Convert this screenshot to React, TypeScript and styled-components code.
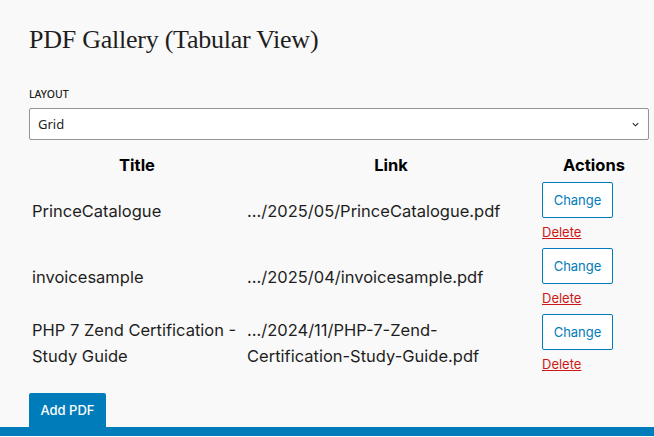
import React from "react";
import styled, { createGlobalStyle } from "styled-components";

const Global = createGlobalStyle`
  html, body { margin: 0; padding: 0; background: #f9f9f9; }
  body { font-family: Inter, "Noto Sans", sans-serif; color: #1e1e1e; }
  * { box-sizing: border-box; }
`;

const Page = styled.div`
  width: 654px;
  height: 437px;
  overflow: hidden;
  display: flex;
  flex-direction: column;
`;

const Content = styled.div`
  padding: 22px 5px 0 29px;
  display: flex;
  flex-direction: column;
`;

const Heading = styled.h2`
  margin: 0;
  font-family: "Liberation Serif", serif;
  font-weight: 400;
  font-size: 26px;
  line-height: 36px;
  letter-spacing: -0.25px;
  color: #1e1e1e;
`;

const Label = styled.label`
  margin-top: 29px;
  font-family: "Noto Sans", sans-serif;
  font-size: 10.5px;
  font-weight: 500;
  text-transform: uppercase;
  line-height: 14px;
  color: #1e1e1e;
`;

const SelectBox = styled.div`
  margin-top: 7px;
  height: 32px;
  width: 620px;
  background: #fff;
  border: 1px solid #949494;
  border-radius: 2px;
  display: flex;
  align-items: center;
  justify-content: space-between;
  padding: 0 7px 0 8px;
  font-family: "Noto Sans", sans-serif;
  font-size: 13px;
  color: #1e1e1e;
`;

const Table = styled.table`
  margin-top: 11px;
  width: 622px;
  border-collapse: collapse;
  table-layout: fixed;
`;

const Th = styled.th<{ $w: number }>`
  width: ${(p) => p.$w}px;
  font-size: 16.5px;
  font-weight: 700;
  text-align: center;
  padding: 1px 3px;
  line-height: 26px;
  color: #000;
`;

const Td = styled.td`
  font-size: 16.5px;
  line-height: 26px;
  padding: 3px 3px 5px 3px;
  vertical-align: middle;
  color: #1e1e1e;
`;

const LinkTd = styled(Td)`
  padding-left: 2px;
`;

const ActionCell = styled.td`
  padding: 3px 3px 5px 5px;
  vertical-align: top;
`;

const ChangeButton = styled.button`
  display: block;
  width: 71px;
  height: 36px;
  border: 1px solid #007cba;
  border-radius: 2px;
  background: #fff;
  color: #007cba;
  font-family: Inter, sans-serif;
  font-size: 13px;
  padding: 0;
`;

const DeleteLink = styled.a`
  display: block;
  width: fit-content;
  margin-top: 7px;
  font-family: Inter, sans-serif;
  font-size: 13px;
  line-height: 15px;
  color: #cc1818;
  text-decoration: underline;
`;

const AddButton = styled.button`
  align-self: flex-start;
  margin-top: 16px;
  width: 77px;
  height: 34px;
  background: #007cba;
  color: #fff;
  border: none;
  border-radius: 2px 2px 0 0;
  font-family: Inter, sans-serif;
  font-size: 13px;
  font-weight: 500;
  padding: 0;
`;

const BottomBar = styled.div`
  height: 9px;
  flex-shrink: 0;
  background: #007cba;
`;

const Chevron = () => (
  <svg width="11" height="11" viewBox="0 0 24 24" fill="none" stroke="#1e1e1e" strokeWidth="2.2">
    <path d="M6 9l6 6 6-6" />
  </svg>
);

const rows = [
  { title: "PrinceCatalogue", link: "…/2025/05/PrinceCatalogue.pdf" },
  { title: "invoicesample", link: "…/2025/04/invoicesample.pdf" },
  { title: "PHP 7 Zend Certification - Study Guide", link: "…/2024/11/PHP-7-Zend-Certification-Study-Guide.pdf" },
];

export default function App() {
  return (
    <Page>
      <Global />
      <Content>
        <Heading>PDF Gallery (Tabular View)</Heading>
        <Label>Layout</Label>
        <SelectBox>
          <span>Grid</span>
          <Chevron />
        </SelectBox>
        <Table>
          <thead>
            <tr>
              <Th $w={216}>Title</Th>
              <Th $w={292}>Link</Th>
              <Th $w={114}>Actions</Th>
            </tr>
          </thead>
          <tbody>
            {rows.map((r) => (
              <tr key={r.title}>
                <Td>{r.title}</Td>
                <LinkTd>{r.link}</LinkTd>
                <ActionCell>
                  <ChangeButton>Change</ChangeButton>
                  <DeleteLink href="#">Delete</DeleteLink>
                </ActionCell>
              </tr>
            ))}
          </tbody>
        </Table>
        <AddButton>Add PDF</AddButton>
      </Content>
      <BottomBar />
    </Page>
  );
}
